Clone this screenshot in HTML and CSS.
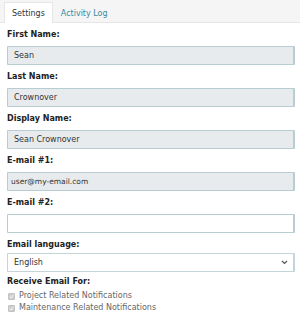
FILE: index.html
```html
<!DOCTYPE html>
<html lang="en">
<head>
  <meta charset="UTF-8" />
  <meta name="viewport" content="width=device-width, initial-scale=1.0" />
  <title>User Settings</title>
  <link rel="stylesheet" href="styles.css">
</head>
<body>
  <div class="tabs">
    <div class="tab active">Settings</div>
    <div class="tab">Activity Log</div>
  </div>

  <div class="form">
    <div class="field">
      <label>First Name:</label>
      <input type="text" class="readonly" value="Sean" readonly />
    </div>
    <div class="field">
      <label>Last Name:</label>
      <input type="text" class="readonly" value="Crownover" readonly />
    </div>
    <div class="field">
      <label>Display Name:</label>
      <input type="text" class="readonly" value="Sean Crownover" readonly />
    </div>
    <div class="field">
      <label>E-mail #1:</label>
      <input type="text" class="readonly small" value="user@my-email.com" readonly />
    </div>
    <div class="field">
      <label>E-mail #2:</label>
      <input type="text" value="" />
    </div>
    <div class="field lang">
      <label>Email language:</label>
      <div class="select">
        <span>English</span>
        <svg width="7" height="5" viewBox="0 0 7 5"><path d="M1 1 L3.5 3.5 L6 1" fill="none" stroke="#555" stroke-width="1.2"/></svg>
      </div>
    </div>
    <div class="field notify">
      <label>Receive Email For:</label>
      <div class="check">
        <span class="box"><svg width="5" height="5" viewBox="0 0 5 5"><path d="M0.6 2.6 L2 4 L4.4 1" fill="none" stroke="#f4f4f4" stroke-width="1"/></svg></span>
        Project Related Notifications
      </div>
      <div class="check">
        <span class="box"><svg width="5" height="5" viewBox="0 0 5 5"><path d="M0.6 2.6 L2 4 L4.4 1" fill="none" stroke="#f4f4f4" stroke-width="1"/></svg></span>
        Maintenance Related Notifications
      </div>
    </div>
  </div>
</body>
</html>
```

FILE: styles.css
```css
body {
  margin: 0;
  font-family: "DejaVu Sans", Verdana, sans-serif;
  font-size: 8px;
  color: #222;
  background: white;
}
.tabs {
  display: flex;
  align-items: flex-end;
  height: 22px;
  padding-left: 4px;
  background: #f5f5f5;
  border-bottom: 1px solid #e6e6e6;
}
.tab {
  height: 20px;
  line-height: 21px;
  padding: 0 7px;
  color: #3b8a9c;
  border: 1px solid transparent;
  border-bottom: none;
  margin-bottom: -1px;
}
.tab.active {
  background: white;
  color: #333;
  border-color: #e6e6e6;
}
.form {
  padding: 6px 5px 0 7px;
}
.field {
  margin-bottom: 6px;
}
.field label {
  display: block;
  font-weight: bold;
  line-height: 12px;
  margin-bottom: 5px;
  color: #222;
}
.field.lang label {
  margin-bottom: 2px;
}
.field.lang {
  margin-bottom: 4px;
}
.field.notify label {
  margin-bottom: 2px;
}
input {
  box-sizing: border-box;
  width: 100%;
  height: 19px;
  margin: 0;
  padding: 0 6px;
  font-family: "DejaVu Sans", Verdana, sans-serif;
  font-size: 8px;
  color: #333;
  background: white;
  border: 1px solid #b7cdd2;
  border-right-width: 2px;
  border-radius: 1px;
  outline: none;
}
input.readonly {
  background: #e8ebee;
}
input.small {
  font-size: 7.5px;
  padding-left: 3px;
}
.select {
  box-sizing: border-box;
  display: flex;
  align-items: center;
  justify-content: space-between;
  height: 19px;
  padding: 0 5px 0 6px;
  border: 1px solid #c4d5d9;
  border-right-width: 2px;
  border-radius: 1px;
  color: #333;
}
.check {
  display: flex;
  align-items: center;
  line-height: 12px;
  color: #666;
  padding-left: 1px;
}
.check .box {
  box-sizing: border-box;
  display: flex;
  align-items: center;
  justify-content: center;
  width: 7px;
  height: 7px;
  margin-right: 4px;
  background: #cfcfcf;
  border: 1px solid #c2c2c2;
  border-radius: 1px;
}
```
